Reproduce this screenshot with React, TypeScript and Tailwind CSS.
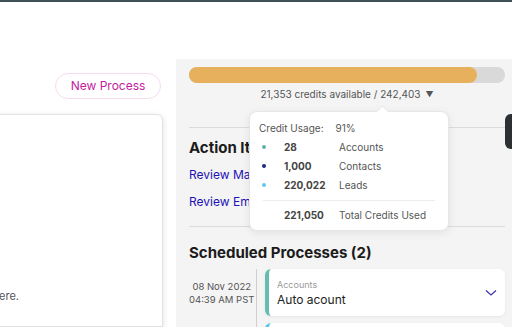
import React from "react";

const usage = [
  { value: "28", label: "Accounts", dot: "bg-[#5fb3a7]" },
  { value: "1,000", label: "Contacts", dot: "bg-[#1b2a7a]" },
  { value: "220,022", label: "Leads", dot: "bg-[#62c6f2]" },
];

const CreditPopover = () => (
  <div className="absolute left-[60px] top-[52px] w-[200px] rounded-lg border border-[#e6e6e6] bg-white px-[9px] pt-[10px] pb-[9px] text-[10px] text-[#555] shadow-[0_2px_8px_rgba(0,0,0,0.08)] z-10">
    {/* arrow */}
    <div className="absolute -top-[5px] left-[128px] h-[9px] w-[9px] rotate-45 border-l border-t border-[#e6e6e6] bg-white" />
    <div className="flex gap-[12px] leading-[12px]">
      <span>Credit Usage:</span>
      <span>91%</span>
    </div>
    <div className="mt-[7px] flex flex-col gap-[7px]">
      {usage.map((u) => (
        <div key={u.label} className="flex items-center leading-[12px]">
          <span className={`ml-[3px] h-[4px] w-[4px] rounded-full ${u.dot}`} />
          <span className="ml-[18px] w-[55px] font-bold text-[#444]">{u.value}</span>
          <span>{u.label}</span>
        </div>
      ))}
    </div>
    <div className="mx-[4px] mt-[9px] border-t border-[#ececec]" />
    <div className="mt-[8px] flex leading-[12px]">
      <span className="ml-[25px] w-[55px] font-bold text-[#444]">221,050</span>
      <span>Total Credits Used</span>
    </div>
  </div>
);

export default function App() {
  return (
    <div
      className="relative h-[327px] w-[512px] overflow-hidden bg-white"
      style={{ fontFamily: "Inter, 'Noto Sans', sans-serif" }}
    >
      <div className="h-[2px] bg-[#3f5157]" />
      <div className="flex h-[325px]">
        {/* left column */}
        <div className="flex w-[176px] shrink-0 flex-col">
          <div className="mt-[71px] flex justify-end pr-[15px]">
            <button className="h-[26px] w-[106px] rounded-full border border-[#f6dcef] text-[12px] text-[#c21c9f]">
              New Process
            </button>
          </div>
          <div className="-ml-[16px] mt-[15px] flex-1 rounded-tr-md border border-[#e2e2e2] bg-white shadow-[0_2px_6px_rgba(0,0,0,0.12)] w-[179px]">
            <div className="mt-[173px] flex w-[34px] justify-end whitespace-nowrap text-[11px] text-[#555]">
              No processes here.
            </div>
          </div>
        </div>

        {/* right panel */}
        <div className="mt-[57px] flex-1 overflow-hidden bg-[#f4f4f4] pl-[13px] pr-[7px]">
          <div className="relative pt-[8px]">
            <div className="h-[16px] rounded-full bg-[#d9d9d9]">
              <div className="h-full w-[91%] rounded-full bg-[#e7b05d]" />
            </div>
            <div className="mt-[4px] flex items-center justify-center gap-[5px] text-[10px] leading-[14px] text-[#555]">
              <span>21,353 credits available / 242,403</span>
              <span className="text-[8px]">▼</span>
            </div>
            <CreditPopover />
          </div>

          <div className="mt-[26px] border-t border-[#dcdcdc]" />

          <div className="-mr-[40px] flex">
            <div className="flex-1">
              <div className="mt-[11px] text-[15px] font-bold leading-[18px] text-[#1b1b1b]">
                Action Items (2)
              </div>
              <div className="mt-[11px] text-[12px] leading-[14px] text-[#2113b5]">Review Matches</div>
              <div className="mt-[13px] text-[12px] leading-[14px] text-[#2113b5]">Review Emails</div>
            </div>
            <div className="ml-[4px] mt-[-14px] h-[35px] w-[40px] rounded-md bg-[#2c3033]" />
          </div>

          <div className="mt-[17px] border-t border-[#dcdcdc]" />

          <div className="mt-[17px] text-[15px] font-bold leading-[18px] text-[#1b1b1b]">
            Scheduled Processes (2)
          </div>

          <div className="mt-[7px] flex">
            <div className="w-[67px] shrink-0 whitespace-nowrap pt-[11px] pr-[5px] text-right text-[9.5px] leading-[13px] text-[#555]">
              <div>08 Nov 2022</div>
              <div>04:39 AM PST</div>
            </div>
            <div className="w-[1px] shrink-0 bg-[#cfcfcf]" />
            <div className="ml-[8px] flex flex-1 flex-col gap-[7px]">
              <div className="flex h-[47px] items-center rounded-md border-l-[4px] border-[#66bcae] bg-white pl-[8px] pr-[8px] shadow-[0_1px_3px_rgba(0,0,0,0.06)]">
                <div className="flex-1">
                  <div className="text-[9px] leading-[11px] text-[#9a9a9a]">Accounts</div>
                  <div className="mt-[2px] text-[12px] leading-[15px] text-[#222]">Auto acount</div>
                </div>
                <svg width="12" height="8" viewBox="0 0 12 8" fill="none">
                  <path d="M1 1.5 L6 6 L11 1.5" stroke="#3b2fa3" strokeWidth="1.2" />
                </svg>
              </div>
              <div className="h-[47px] rounded-md border-l-[4px] border-[#5cc2ef] bg-white shadow-[0_1px_3px_rgba(0,0,0,0.06)]" />
            </div>
          </div>
        </div>
      </div>
    </div>
  );
}
